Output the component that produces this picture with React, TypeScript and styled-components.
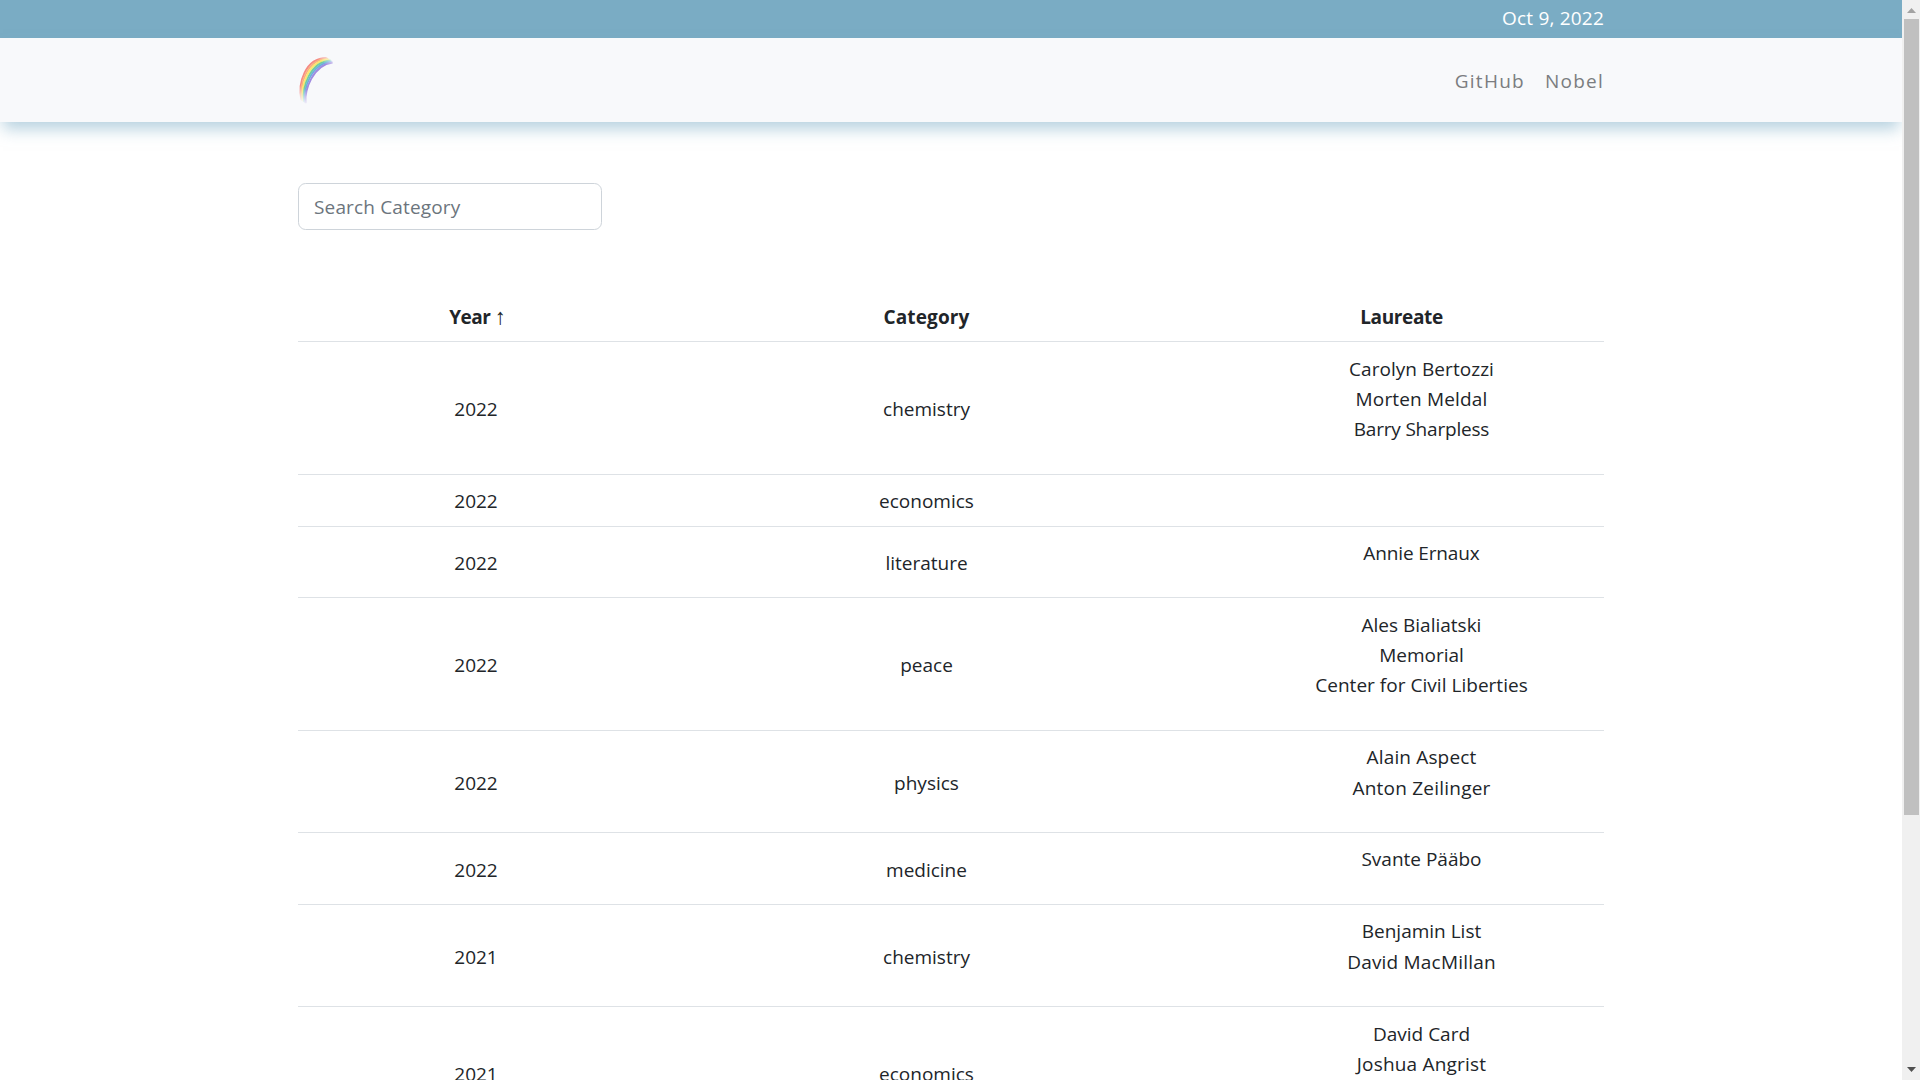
import React from "react";
import styled, { createGlobalStyle } from "styled-components";

const GlobalStyle = createGlobalStyle`
  html { font-size: 20.25px; }
  *, *::before, *::after { box-sizing: border-box; }
  body {
    margin: 0;
    background: #fff;
    color: #212529;
    font-family: "Open Sans", "Noto Sans", sans-serif;
    line-height: 1.5rem;
    overflow: hidden;
  }
`;

const Window = styled.div`
  display: grid;
  grid-template-columns: 1fr 18px;
  height: 1080px;
  overflow: hidden;
`;

const Page = styled.div`
  height: 1080px;
  overflow: hidden;
  font-size: 19px;
`;

const Container = styled.div`
  width: 1306px;
  margin-left: 298px;
`;

const DateBar = styled.div`
  height: 38px;
  background: #7aacc4;
  color: #fff;
`;

const DateText = styled(Container)`
  text-align: right;
  line-height: 36px;
  letter-spacing: 0.2px;
`;

const Nav = styled.nav`
  height: 84px;
  background: #f8f9fb;
  box-shadow: 0 10px 15px -3px rgba(122, 172, 196, 0.55);
`;

const NavInner = styled(Container)`
  height: 100%;
  display: flex;
  align-items: center;
  justify-content: space-between;
`;

const Logo = styled.svg`
  display: block;
  width: 40px;
  height: 60px;
`;

const Links = styled.div`
  display: flex;
  gap: 20px;
  padding-top: 3px;
`;

const NavLink = styled.a`
  color: #7b7d80;
  letter-spacing: 1.25px;
  text-decoration: none;
`;

const Search = styled.input`
  display: block;
  width: 304px;
  height: 47px;
  margin: 61px 0 60.7px;
  padding: 0 15px;
  border: 1px solid #ced4da;
  border-radius: 7.6px;
  font: inherit;
  letter-spacing: 0.15px;
  background: #fff;
  outline: none;
  &::placeholder { color: #6c757d; opacity: 1; }
`;

const Row = styled.div`
  display: grid;
  grid-template-columns: 356px 545px 405px;
  align-items: center;
  text-align: center;
  border-bottom: 1px solid #dee2e6;
`;

const HeadRow = styled(Row)`
  font-weight: 700;
`;

const Cell = styled.div<{ $track?: number }>`
  padding: 0.555rem 0.5rem 0.445rem;
  white-space: pre;
  letter-spacing: ${(p) => p.$track ?? 0}px;
`;

const Arrow = styled.span`
  display: inline-block;
  width: 10px;
  margin: 0 -2px 0 0;
  font-family: "Liberation Sans", "DejaVu Sans", sans-serif;
  font-size: 22px;
  font-weight: 400;
  line-height: 0;
`;

const Names = styled.ul`
  list-style: none;
  margin: 0 0 1rem;
  padding: 0 0 0 40px;
`;

const Name = styled.li<{ $track?: number }>`
  letter-spacing: ${(p) => p.$track ?? 0}px;
`;

const Scrollbar = styled.div`
  display: flex;
  flex-direction: column;
  align-items: flex-start;
  background: #f0f0f0;
  padding-left: 2px;
`;

const Thumb = styled.div`
  width: 15px;
  height: 796px;
  background: #c0c0c0;
`;

const ArrowButton = styled.svg`
  display: block;
  width: 15px;
  height: 19px;
`;

const Spacer = styled.div`
  flex: 1;
`;

type Laureate = { name: string; track?: number };
type Prize = { year: number; category: string; laureates: Laureate[] };

const prizes: Prize[] = [
  {
    year: 2022,
    category: "chemistry",
    laureates: [
      { name: "Carolyn Bertozzi", track: 0.05 },
      { name: "Morten Meldal", track: 0.15 },
      { name: "Barry Sharpless", track: -0.2 },
    ],
  },
  { year: 2022, category: "economics", laureates: [] },
  { year: 2022, category: "literature", laureates: [{ name: "Annie Ernaux", track: -0.13 }] },
  {
    year: 2022,
    category: "peace",
    laureates: [{ name: "Ales Bialiatski" }, { name: "Memorial" }, { name: "Center for Civil Liberties", track: 0.03 }],
  },
  {
    year: 2022,
    category: "physics",
    laureates: [
      { name: "Alain Aspect", track: 0.15 },
      { name: "Anton Zeilinger", track: 0.22 },
    ],
  },
  { year: 2022, category: "medicine", laureates: [{ name: "Svante Pääbo" }] },
  {
    year: 2021,
    category: "chemistry",
    laureates: [{ name: "Benjamin List" }, { name: "David MacMillan", track: 0.2 }],
  },
  {
    year: 2021,
    category: "economics",
    laureates: [{ name: "David Card" }, { name: "Joshua Angrist", track: 0.2 }, { name: "Guido Imbens" }],
  },
];

const bands = [
  { color: "#f58a84", d: "M94 212 C83 163 105 86 170 86" },
  { color: "#f9b07e", d: "M96 214 C87 167 110 89 174 88" },
  { color: "#fbe66c", d: "M99 216 C91 170 115 92 178 90.500" },
  { color: "#74cf98", d: "M102 218 C96 173 119 98 182 93.500" },
  { color: "#6db0dc", d: "M104 220 C100 177 123 102 185 96.500" },
  { color: "#a08be0", d: "M107 222 C103 182 128 107 188 99.500" },
];

function RainbowLogo() {
  return (
    <Logo viewBox="84 62 120 180" aria-label="Rainbow">
      <defs>
        <linearGradient id="fade" gradientUnits="userSpaceOnUse" x1="98" y1="222" x2="192" y2="88">
          <stop offset="0" stopColor="#fff" stopOpacity="0" />
          <stop offset="0.25" stopColor="#fff" />
          <stop offset="0.82" stopColor="#fff" />
          <stop offset="1" stopColor="#fff" stopOpacity="0.15" />
        </linearGradient>
        <mask id="ends" maskUnits="userSpaceOnUse" x="80" y="60" width="130" height="180">
          <rect x="80" y="60" width="130" height="180" fill="url(#fade)" />
        </mask>
        <filter id="soft">
          <feGaussianBlur stdDeviation="1.2" />
        </filter>
      </defs>
      <g mask="url(#ends)">
        <g filter="url(#soft)" fill="none" strokeWidth="5.5">
          {bands.map((b) => (
            <path key={b.color} d={b.d} stroke={b.color} />
          ))}
        </g>
      </g>
    </Logo>
  );
}

export default function App() {
  return (
    <>
      <GlobalStyle />
      <Window>
        <Page>
          <DateBar>
            <DateText>Oct 9, 2022</DateText>
          </DateBar>
          <Nav>
            <NavInner>
              <RainbowLogo />
              <Links>
                <NavLink>GitHub</NavLink>
                <NavLink>Nobel</NavLink>
              </Links>
            </NavInner>
          </Nav>
          <Container>
            <Search placeholder="Search Category" />
            <HeadRow>
              <Cell $track={-0.5}>Year <Arrow>↑</Arrow></Cell>
              <Cell $track={0.15}>Category</Cell>
              <Cell $track={-0.35}>Laureate</Cell>
            </HeadRow>
            {prizes.map((p) => (
              <Row key={`${p.year}-${p.category}`}>
                <Cell>{p.year}</Cell>
                <Cell>{p.category}</Cell>
                <Cell>
                  {p.laureates.length > 0 && (
                    <Names>
                      {p.laureates.map((l) => (
                        <Name key={l.name} $track={l.track}>{l.name}</Name>
                      ))}
                    </Names>
                  )}
                </Cell>
              </Row>
            ))}
          </Container>
        </Page>
        <Scrollbar>
          <ArrowButton viewBox="0 0 15 19">
            <path d="M3 13 L7.500 8 L12 13 Z" fill="#a3a3a3" />
          </ArrowButton>
          <Thumb />
          <Spacer />
          <ArrowButton viewBox="0 0 15 19">
            <path d="M3 6 L7.500 11 L12 6 Z" fill="#505050" />
          </ArrowButton>
        </Scrollbar>
      </Window>
    </>
  );
}
